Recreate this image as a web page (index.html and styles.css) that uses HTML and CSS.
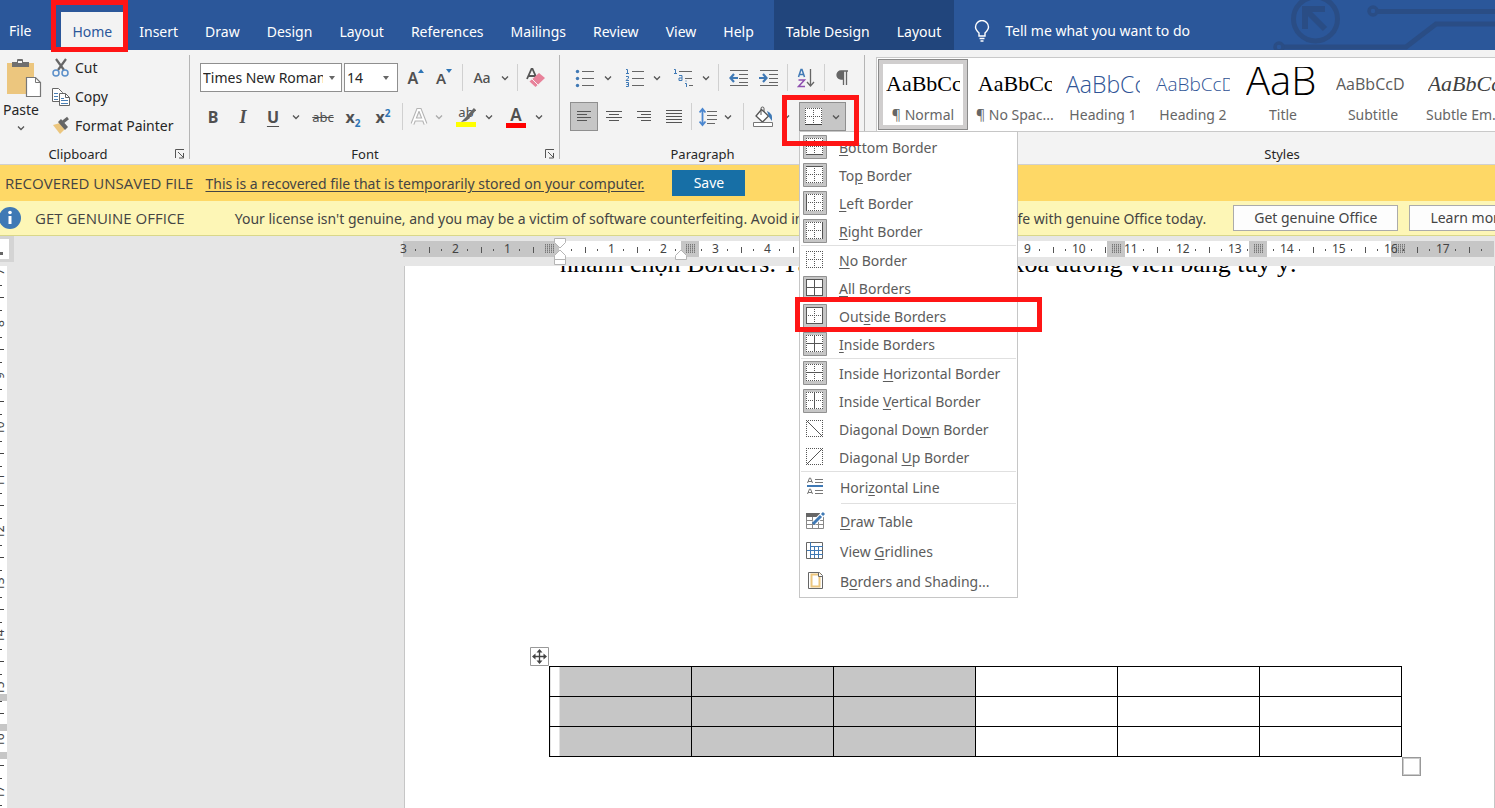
FILE: index.html
```html
<!DOCTYPE html>
<html lang="en">
<head>
<meta charset="utf-8">
<title>Document - Word</title>
<link rel="stylesheet" href="styles.css">
</head>
<body>
<svg class="defs" aria-hidden="true">
  <symbol id="chev" viewBox="0 0 8 6"><path d="M1 1.5l3 3 3-3" fill="none" stroke="#555" stroke-width="1.3"/></symbol>
  <symbol id="launch" viewBox="0 0 10 10"><path d="M.5 9V.5H9M3 3l5 5M8.5 4v5H4" fill="none" stroke="#555"/></symbol>
  <symbol id="tile" viewBox="0 0 24 24"><path d="M.5.5h23v23H.5z" fill="#c6c6c6" stroke="#919191"/></symbol>
  <symbol id="dots" viewBox="0 0 24 24"><path d="M3 3h17v17H3z" fill="#fff" stroke="none"/><path d="M3 3.5h17M3 19.5h17M3.5 3v17M19.5 3v17" stroke="#555" stroke-dasharray="1 1"/></symbol>
  <symbol id="cross" viewBox="0 0 24 24"><path d="M5 11.5h14M11.5 5v14" stroke="#555" stroke-dasharray="1 1"/></symbol>
</svg>

<header class="titlebar">
  <svg class="circuit" width="223" height="50" viewBox="0 0 223 50" aria-hidden="true" fill="none" stroke="#2a4d85">
    <circle cx="43.500" cy="19" r="22" stroke-width="5"/>
    <path d="M33 29V9h20M36 12l17 17" stroke-width="6"/>
    <circle cx="101" cy="11" r="4" stroke-width="3.500"/><path d="M105 11.500h118M10 47h124l30-23h60" stroke-width="5"/>
    <circle cx="7" cy="47" r="4" stroke-width="3.500"/>
  </svg>
  <nav class="tabs">
    <a class="tab file" href="#">File</a>
    <a class="tab active" href="#">Home<span class="mark mark-home"></span></a>
    <a class="tab" href="#">Insert</a>
    <a class="tab" href="#">Draw</a>
    <a class="tab" href="#">Design</a>
    <a class="tab" href="#">Layout</a>
    <a class="tab" href="#">References</a>
    <a class="tab" href="#">Mailings</a>
    <a class="tab" href="#">Review</a>
    <a class="tab" href="#">View</a>
    <a class="tab" href="#">Help</a>
    <span class="context"><a class="tab" href="#">Table Design</a><a class="tab" href="#">Layout</a></span>
  </nav>
  <button class="tell" type="button">
    <svg width="16" height="22" viewBox="0 0 16 22" fill="none" stroke="#fff" stroke-width="1.400"><path d="M5 16v-3C3 11 1.500 9.500 1.500 7a6.500 6.500 0 0113 0c0 2.500-1.500 4-3.500 6v3zM5.500 18.500h5M6.500 21h3"/></svg>
    Tell me what you want to do
  </button>
</header>

<section class="ribbon">
  <div class="group clipboard">
    <div class="body">
      <button class="paste" type="button">
        <svg width="36" height="40" viewBox="0 0 36 40"><path d="M1 4h27v31H1z" fill="#ecc67e"/><path d="M6 8V3h5V1q0-1 1-1h4q1 0 1 1v2h6v5z" fill="#6f6f6f"/><path d="M12 2h4v2h-4z" fill="#f3f3f3"/><path d="M20.500 18.500h9l5 5v14h-14z" fill="#fff" stroke="#777" stroke-width="1.200"/><path d="M29.500 18.500v5h5" fill="none" stroke="#777"/></svg>
        <span>Paste</span>
        <svg width="8" height="6"><use href="#chev"/></svg>
      </button>
      <div class="clips">
        <button type="button"><svg width="18" height="20" viewBox="0 0 18 20" fill="none"><path d="M4 1l8 11M14 1L6 12" stroke="#666" stroke-width="2.200"/><circle cx="4" cy="15" r="3" stroke="#5b8fc9" stroke-width="1.500"/><circle cx="13" cy="15" r="3" stroke="#5b8fc9" stroke-width="1.500"/></svg>Cut</button>
        <button type="button"><svg width="18" height="20" viewBox="0 0 18 20" fill="#fff" stroke="#666"><path d="M.5 1.500h6l4 4v9H.5z"/><path d="M2 6.500h4M2 9.500h4M2 12.500h4" stroke="#4a7fb5"/><path d="M7.500 6.500h6l4 4v8h-10z"/><path d="M13.500 6.500v4h4" fill="none"/><path d="M9 11.500h3M9 13.500h7M9 16.500h7" stroke="#4a7fb5"/></svg>Copy</button>
        <button type="button"><svg width="18" height="20" viewBox="0 0 18 20"><path d="M1 9l7-2 5 6-5 5z" fill="#ecc67e"/><path d="M6 6l3-3 7 8-3 3z" fill="#666"/><path d="M11 6l5-4" stroke="#666" stroke-width="3"/></svg>Format Painter</button>
      </div>
    </div>
    <div class="caption"><span>Clipboard</span><button type="button" aria-label="Clipboard options"><svg width="10" height="10"><use href="#launch"/></svg></button></div>
  </div>

  <div class="group font">
    <div class="body rows">
      <div class="row">
        <label class="combo name"><select aria-label="Font"><option>Times New Roman</option></select><svg width="6" height="4" viewBox="0 0 6 4"><path d="M0 0h6L3 4z" fill="#666"/></svg></label>
        <label class="combo size"><select aria-label="Font size"><option>14</option></select><svg width="6" height="4" viewBox="0 0 6 4"><path d="M0 0h6L3 4z" fill="#666"/></svg></label>
        <button class="ib narrow lead" type="button" aria-label="Grow font"><span class="ga">A</span><svg class="tip" width="6" height="4" viewBox="0 0 6 4"><path d="M0 4h6L3 0z" fill="#2e75b6"/></svg></button>
        <button class="ib narrow" type="button" aria-label="Shrink font"><span class="ga sm">A</span><svg class="tip" width="6" height="4" viewBox="0 0 6 4"><path d="M0 0h6L3 4z" fill="#2e75b6"/></svg></button>
        <i class="sep"></i>
        <button class="ib split" type="button" aria-label="Change case"><span class="case">Aa</span><svg width="8" height="6"><use href="#chev"/></svg></button>
        <i class="sep"></i>
        <button class="ib narrow" type="button" aria-label="Clear formatting"><svg width="20" height="22" viewBox="0 0 20 22"><path d="M1 12L5.500 2h1L11 12M3 9h6" fill="none" stroke="#555" stroke-width="1.800"/><path d="M3.500 14.500L13 6l6 5-9.500 9z" fill="#e8829a"/><path d="M6 12l6 6" stroke="#f3f3f3"/></svg></button>
      </div>
      <div class="row second">
        <button class="ib" type="button"><b>B</b></button>
        <button class="ib" type="button"><b class="it">I</b></button>
        <button class="ib split gap" type="button"><b class="un">U</b><svg width="8" height="6"><use href="#chev"/></svg></button>
        <button class="ib" type="button"><s>abc</s></button>
        <button class="ib" type="button"><b>x<sub>2</sub></b></button>
        <button class="ib" type="button"><b>x<sup>2</sup></b></button>
        <i class="sep"></i>
        <button class="ib split slim gap" type="button" aria-label="Text effects"><svg width="18" height="20" viewBox="0 0 18 20"><path d="M2.500 17L8 3h2l5.500 14M5 12.500h8" fill="none" stroke="#b4b4b4" stroke-width="4"/><path d="M2.500 17L8 3h2l5.500 14M5 12.500h8" fill="none" stroke="#fff" stroke-width="1.800"/></svg><svg class="dim" width="8" height="6"><use href="#chev"/></svg></button>
        <button class="ib split gap" type="button" aria-label="Highlight"><span class="hl"><em>ab</em><svg width="16" height="15" viewBox="0 0 16 15"><path d="M15 1L8 9" stroke="#666" stroke-width="3"/><path d="M8 7l2 3-4 3-5 1z" fill="#666"/></svg></span><svg width="8" height="6"><use href="#chev"/></svg></button>
        <button class="ib split" type="button" aria-label="Font color"><span class="fc">A</span><svg width="8" height="6"><use href="#chev"/></svg></button>
      </div>
    </div>
    <div class="caption"><span>Font</span><button type="button" aria-label="Font options"><svg width="10" height="10"><use href="#launch"/></svg></button></div>
  </div>

  <div class="group para">
    <div class="body rows">
      <div class="row">
        <button class="ib split gap" type="button" aria-label="Bullets"><svg width="20" height="20" viewBox="0 0 20 20"><path d="M7 3.500h12M7 10.500h12M7 17.500h12" stroke="#666"/><g fill="#3f79b5"><circle cx="2.500" cy="3.500" r="1.700"/><circle cx="2.500" cy="10.500" r="1.700"/><circle cx="2.500" cy="17.500" r="1.700"/></g></svg><svg width="8" height="6"><use href="#chev"/></svg></button>
        <button class="ib split gap" type="button" aria-label="Numbering"><svg width="20" height="20" viewBox="0 0 20 20" fill="none"><path d="M8 3.500h12M8 10.500h12M8 17.500h12" stroke="#666"/><path d="M2 1.500h1.500V5M2 5.500h3M2 8.500h2.500v1.500L2 12.500h3M2 14.500h2.500v4H2M2.500 16.500h2" stroke="#3f79b5"/></svg><svg width="8" height="6"><use href="#chev"/></svg></button>
        <button class="ib split gap" type="button" aria-label="Multilevel list"><svg width="20" height="20" viewBox="0 0 20 20" fill="none"><path d="M6 3.500h13M12 10.500h7M16 17.500h4" stroke="#666"/><path d="M1 1.500h1.500V5M1 5.500h3M6 7.500h3v5H6v-2.500h3M12 15.500h1.500V19M13 12.500v1" stroke="#3f79b5"/></svg><svg width="8" height="6"><use href="#chev"/></svg></button>
        <i class="sep tight"></i>
        <button class="ib" type="button" aria-label="Decrease indent"><svg width="19" height="18" viewBox="0 0 19 18" fill="none"><path d="M1 1.500h18M10 5.500h9M10 9.500h9M10 13.500h9M1 16.500h18" stroke="#666"/><path d="M9 9H2M5 5L1.500 9 5 13" stroke="#3f79b5" stroke-width="2.200"/></svg></button>
        <button class="ib" type="button" aria-label="Increase indent"><svg width="19" height="18" viewBox="0 0 19 18" fill="none"><path d="M1 1.500h18M10 5.500h9M10 9.500h9M10 13.500h9M1 16.500h18" stroke="#666"/><path d="M0 9h7M4 5l3.500 4L4 13" stroke="#3f79b5" stroke-width="2.200"/></svg></button>
        <i class="sep"></i>
        <button class="ib narrow" type="button" aria-label="Sort"><svg width="18" height="20" viewBox="0 0 18 20" fill="none"><path d="M1.500 9L4 1.500h1L7.500 9M2.500 6.500h4" stroke="#3f79b5" stroke-width="1.500"/><path d="M1.500 12h6l-6 6.500h6.500" stroke="#8e4fb0" stroke-width="1.500"/><path d="M13.500 1v16M10 14l3.500 4 3.500-4" stroke="#666" stroke-width="1.300"/></svg></button>
        <i class="sep"></i>
        <button class="ib narrow" type="button" aria-label="Show marks"><svg width="14" height="16" viewBox="0 0 14 16"><path d="M7 9H5a4 4 0 010-8h7M7.500 1v14M10.500 1v14" fill="none" stroke="#666" stroke-width="1.300"/><path d="M7 9H5a4 4 0 010-8h2z" fill="#666"/></svg></button>
      </div>
      <div class="row aligns">
        <button class="ib narrow on" type="button" aria-label="Align left"><svg width="16" height="14" viewBox="0 0 16 14"><path d="M1 1.500h14M1 4.500h10M1 7.500h14M1 10.500h10" stroke="#555"/></svg></button>
        <button class="ib narrow" type="button" aria-label="Center"><svg width="16" height="14" viewBox="0 0 16 14"><path d="M0 1.500h16M3 4.500h10M0 7.500h16M3 10.500h10" stroke="#555"/></svg></button>
        <button class="ib narrow" type="button" aria-label="Align right"><svg width="16" height="14" viewBox="0 0 16 14"><path d="M1 1.500h14M5 4.500h10M1 7.500h14M5 10.500h10" stroke="#555"/></svg></button>
        <button class="ib narrow" type="button" aria-label="Justify"><svg width="16" height="14" viewBox="0 0 16 14"><path d="M0 .5h16M0 3.500h16M0 6.500h16M0 9.500h16M0 12.500h16" stroke="#555"/></svg></button>
        <i class="sep tight"></i>
        <button class="ib split slim gap" type="button" aria-label="Line spacing"><svg width="18" height="20" viewBox="0 0 18 20" fill="none"><path d="M8 4.500h10M8 8.500h10M8 12.500h10M8 16.500h8" stroke="#666"/><path d="M3.500 2v16M.5 5.500l3-3.500 3 3.500M.5 14.500l3 3.500 3-3.500" stroke="#4a86cf" stroke-width="1.800"/></svg><svg width="8" height="6"><use href="#chev"/></svg></button>
        <i class="sep"></i>
        <button class="ib split" type="button" aria-label="Shading"><svg width="22" height="22" viewBox="0 0 22 22"><path d="M9.500 3.500l7 6.500-6 6-6.500-6z" fill="#fff" stroke="#555" stroke-width="1.300"/><path d="M9 9V2.500Q9 1 10.500 1T12 2.500V6" fill="none" stroke="#555"/><path d="M15 5q6 2 5 10l-3-4z" fill="#3f79b5"/><path d="M1.500 16.500h19v4h-19z" fill="#fff" stroke="#777"/></svg><svg width="8" height="6"><use href="#chev"/></svg></button>
        <div class="borders">
          <button class="ib split on" type="button" aria-label="Borders" aria-expanded="true"><svg width="24" height="24"><use href="#dots"/><use href="#cross"/><path d="M3 19.500h17" stroke="#444"/></svg><svg width="8" height="6"><use href="#chev"/></svg></button>
          <div class="menu" role="menu">
            <button role="menuitem"><svg class="ic"><use href="#tile"/><use href="#dots"/><use href="#cross"/><path d="M3 19.500h17"/></svg><span><u>B</u>ottom Border</span></button>
            <button role="menuitem"><svg class="ic"><use href="#tile"/><use href="#dots"/><use href="#cross"/><path d="M3 3.500h17"/></svg><span>To<u>p</u> Border</span></button>
            <button role="menuitem"><svg class="ic"><use href="#tile"/><use href="#dots"/><use href="#cross"/><path d="M3.500 3v17"/></svg><span><u>L</u>eft Border</span></button>
            <button role="menuitem"><svg class="ic"><use href="#tile"/><use href="#dots"/><use href="#cross"/><path d="M19.500 3v17"/></svg><span><u>R</u>ight Border</span></button>
            <hr>
            <button role="menuitem"><svg class="ic"><use href="#dots"/><use href="#cross"/></svg><span><u>N</u>o Border</span></button>
            <button role="menuitem"><svg class="ic"><use href="#tile"/><use href="#dots"/><path d="M3.500 3.500h16v16h-16zM3 11.500h17M11.500 3v17"/></svg><span><u>A</u>ll Borders</span></button>
            <button role="menuitem"><svg class="ic"><use href="#tile"/><use href="#dots"/><use href="#cross"/><path d="M3.500 3.500h16v16h-16z"/></svg><span>Out<u>s</u>ide Borders</span><i class="mark mark-item"></i></button>
            <button role="menuitem"><svg class="ic"><use href="#tile"/><use href="#dots"/><path d="M3 11.500h17M11.500 3v17"/></svg><span><u>I</u>nside Borders</span></button>
            <hr>
            <button role="menuitem"><svg class="ic"><use href="#tile"/><use href="#dots"/><use href="#cross"/><path d="M3 11.500h17"/></svg><span>Inside <u>H</u>orizontal Border</span></button>
            <button role="menuitem"><svg class="ic"><use href="#tile"/><use href="#dots"/><use href="#cross"/><path d="M11.500 3v17"/></svg><span>Inside <u>V</u>ertical Border</span></button>
            <button role="menuitem"><svg class="ic"><use href="#dots"/><path d="M4 4l15 15"/></svg><span>Diagonal Do<u>w</u>n Border</span></button>
            <button role="menuitem"><svg class="ic"><use href="#dots"/><path d="M4 19L19 4"/></svg><span>Diagonal <u>U</u>p Border</span></button>
            <hr>
            <button class="tall" role="menuitem"><svg class="ic"><path d="M4.500 8l2-5h1l2 5M5 6.500h4M4.500 19l2-5h1l2 5M5 17.500h4M12 4.500h8M12 7.500h8M12 15.500h8M12 18.500h8" stroke="#777"/><path d="M4 11h16" stroke="#3f79b5" stroke-width="2"/></svg><span>Hori<u>z</u>ontal Line</span></button>
            <hr class="inset">
            <button class="tall" role="menuitem"><svg class="ic"><path d="M3.500 5.500h17v14h-17zM3 11.500h17M9.500 8v12M15.500 8v12M3 15.500h17" stroke="#888"/><path d="M3 4h14v4H3z" fill="#666" stroke="none"/><path d="M11 14l9-9" stroke="#fff" stroke-width="5"/><path d="M10 15l8-8M19 6l2-2" stroke="#3f79b5" stroke-width="3"/></svg><span><u>D</u>raw Table</span></button>
            <button class="tall" role="menuitem"><svg class="ic"><path d="M3.500 3.500h16v16h-16z" stroke="#666"/><path d="M8 7.500h12M4 11.500h15M8 15.500h12M7.500 3v16M11.500 7v12M15.500 7v12" stroke="#3f79b5"/></svg><span>View <u>G</u>ridlines</span></button>
            <button class="tall" role="menuitem"><svg class="ic"><path d="M5.500 3.500h11l3 3v13h-14z" stroke="#666"/><path d="M8.500 5.500h8v12h-8z" stroke="#ecc67e" stroke-width="2"/><path d="M15.500 3.500v4h4" fill="#fff" stroke="#666"/></svg><span>B<u>o</u>rders and Shading...</span></button>
          </div>
          <span class="mark mark-borders"></span>
        </div>
      </div>
    </div>
    <div class="caption"><span>Paragraph</span><i></i></div>
  </div>

  <div class="group styles">
    <div class="body">
      <div class="gallery">
        <button class="style current" type="button"><span class="pv body-text">AaBbCc</span><span class="nm">¶ Normal</span></button>
        <button class="style" type="button"><span class="pv body-text">AaBbCc</span><span class="nm">¶ No Spac...</span></button>
        <button class="style" type="button"><span class="pv h1">AaBbCc</span><span class="nm">Heading 1</span></button>
        <button class="style" type="button"><span class="pv h2">AaBbCcD</span><span class="nm">Heading 2</span></button>
        <button class="style" type="button"><span class="pv title">AaB</span><span class="nm">Title</span></button>
        <button class="style" type="button"><span class="pv subtitle">AaBbCcD</span><span class="nm">Subtitle</span></button>
        <button class="style" type="button"><span class="pv subtle">AaBbCc</span><span class="nm">Subtle Em...</span></button>
      </div>
    </div>
    <div class="caption"><span>Styles</span></div>
  </div>
</section>

<section class="bar recovered">
  <strong>RECOVERED UNSAVED FILE</strong>
  <a href="#">This is a recovered file that is temporarily stored on your computer.</a>
  <button type="button">Save</button>
</section>
<section class="bar genuine">
  <svg width="22" height="22" viewBox="0 0 22 22"><circle cx="11" cy="11" r="11" fill="#3f79b5"/><circle cx="11" cy="5.500" r="1.800" fill="#fff"/><path d="M11 9v8" stroke="#fff" stroke-width="3"/></svg>
  <strong>GET GENUINE OFFICE</strong>
  <p>Your license isn't genuine, and you may be a victim of software counterfeiting. Avoid interruption and keep your files safe with genuine Office today.</p>
  <button type="button">Get genuine Office</button>
  <button type="button">Learn more</button>
</section>

<div class="ruler-row">
  <button class="tabstop" type="button" aria-label="Tab stop"></button>
  <div class="ruler">
    <i class="col" style="left:988px"></i>
    <div class="units"><span class="u">3</span><span class="u">2</span><span class="u">1</span><span class="u"></span><span class="u">1</span><span class="u">2</span><span class="u">3</span><span class="u">4</span><span class="u">5</span><span class="u">6</span><span class="u">7</span><span class="u">8</span><span class="u">9</span><span class="u">10</span><span class="u">11</span><span class="u">12</span><span class="u">13</span><span class="u">14</span><span class="u">15</span><span class="u">16</span><span class="u">17</span></div>
    <i class="col" style="left:137px"></i>
    <i class="col" style="left:278px"></i>
    <i class="col" style="left:704px"></i>
    <i class="col" style="left:846px"></i>
    <svg class="indent" width="12" height="29" viewBox="0 0 12 29" fill="#fff" stroke="#b5b5b5"><path d="M.5.5h11v4L6 10 .5 4.500zM6 12l5.500 5.500v4H.5v-4zM.5 21.500h11v5H.5z"/></svg>
    <svg class="indent right" width="12" height="29" viewBox="0 0 12 29" fill="#fff" stroke="#b5b5b5"><path d="M6 12l5.500 5.500v4H.5v-4z"/></svg>
  </div>
</div>

<main class="workspace">
  <div class="vruler">
    <span>7</span><span>8</span><span>9</span><span>10</span><span>11</span><span>12</span><span>13</span><span>14</span><span>15</span><span>16</span><span>17</span>
    <i class="band" style="top:428px"></i><i class="band" style="top:458px"></i><i class="band" style="top:486px"></i>
  </div>
  <article class="page">
    <p lang="vi">nhanh chọn Borders. Tại đây bạn có thể vẽ xóa đường viền bảng tùy ý.</p>
    <div class="tablebox">
      <svg class="move" width="19" height="19" viewBox="0 0 19 19"><path d="M.5.5h18v18H.5z" fill="#fff" stroke="#999"/><path d="M9.500 4v11M4 9.500h11" stroke="#444" stroke-width="1.300"/><path d="M9.500 2l3 3.500h-6zM9.500 17l3-3.500h-6zM2 9.500l3.500-3v6zM17 9.500l-3.500-3v6z" fill="#444"/></svg>
      <table>
        <tr><td class="sel"></td><td class="sel"></td><td class="sel"></td><td></td><td></td><td></td></tr>
        <tr><td class="sel"></td><td class="sel"></td><td class="sel"></td><td></td><td></td><td></td></tr>
        <tr><td class="sel"></td><td class="sel"></td><td class="sel"></td><td></td><td></td><td></td></tr>
      </table>
      <i class="resize"></i>
    </div>
  </article>
</main>
</body>
</html>
```
FILE: styles.css
```css
* { box-sizing: border-box; }
body {
  margin: 0;
  height: 100vh;
  display: flex;
  flex-direction: column;
  overflow: hidden;
  background: #e6e6e6;
  color: #262626;
  font: 14px/20px "Noto Sans", "Open Sans", sans-serif;
}
button {
  margin: 0;
  padding: 0;
  border: 0;
  background: none;
  color: inherit;
  font: inherit;
}
svg { flex: none; display: block; }
p { margin: 0; }
.defs { position: absolute; width: 0; height: 0; }
.mark { position: absolute; border: 5px solid #ff1515; pointer-events: none; z-index: 5; }

/* title bar */
.titlebar {
  position: relative;
  flex: none;
  display: flex;
  height: 50px;
  background: #2b579a;
  color: #fff;
}
.circuit { position: absolute; right: 0; top: 0; }
.tabs { display: flex; gap: 5px; white-space: nowrap; }
.tab {
  position: relative;
  display: flex;
  align-items: center;
  padding: 13px 11px 0;
  color: #fff;
  text-decoration: none;
}
.tab.file { padding-left: 9px; padding-top: 12px; margin-right: 14px; }
.tab.active { margin: 12px 0 3px; padding-top: 4px; background: #f3f3f3; color: #2b579a; }
.mark-home { inset: -12px -5px -5px -10px; }
.context { display: flex; gap: 5px; margin-left: 4px; padding: 0 2px 0 1px; background: #21457c; }
.tell { display: flex; align-items: center; gap: 15px; margin-left: 20px; padding-top: 12px; white-space: nowrap; }

/* ribbon */
.ribbon {
  position: relative;
  z-index: 2;
  flex: none;
  display: flex;
  height: 115px;
  background: #f3f3f3;
  border-bottom: 1px solid #d0d0d0;
  white-space: nowrap;
}
.group { position: relative; flex: none; display: flex; flex-direction: column; }
.group:not(.styles)::after {
  content: "";
  position: absolute;
  right: 0;
  top: 5px;
  bottom: 5px;
  width: 1px;
  background: #b5b5b5;
}
.group .body { height: 94px; }
.clipboard { width: 190px; }
.font { width: 370px; }
.para { width: 305px; }
.styles { flex: 1; min-width: 0; }
.caption { display: grid; grid-template-columns: 1fr 20px; align-items: center; font-size: 13px; text-align: center; }
.caption button { justify-self: center; }
.clipboard .caption span { padding-right: 14px; }
.styles .caption { padding-left: 224px; }
.clipboard .body { display: flex; }
.paste { width: 42px; display: flex; flex-direction: column; align-items: center; padding-top: 9px; }
.paste span { margin: 1px 0 5px; }
.paste svg:first-child { margin-left: 6px; }
.clips { display: flex; flex-direction: column; margin-left: 10px; padding-top: 3px; }
.clips button { display: flex; align-items: center; gap: 5px; height: 29px; }

.rows { display: flex; flex-direction: column; gap: 10px; padding: 13px 0 0 10px; }
.row { display: flex; height: 29px; }
.ib { position: relative; display: flex; align-items: center; justify-content: center; width: 30px; color: #505050; }
.ib.narrow { width: 28px; }
.ib.split { width: 46px; display: grid; grid-template-columns: 30px 16px; justify-items: center; }
.ib.slim { width: 40px; grid-template-columns: 24px 16px; }
.ib.on { background: #c6c6c6; border: 1px solid #8f8f8f; }
.gap { margin-right: 4px; }
.para .gap { margin-right: 3px; }
.lead { margin-left: 4px; }
.sep { width: 1px; height: 27px; margin: 1px 4px; background: #d0d0d0; }
.sep.tight { margin-left: 1px; }
.dim { opacity: .45; }
.aligns .narrow { margin-right: 2px; }

.combo { display: grid; grid-template-columns: 1fr 14px; align-items: center; background: #fff; border: 1px solid #8f8f8f; overflow: hidden; }
.combo.name { width: 142px; margin-right: 2px; grid-template-columns: 122px 1fr; }
.combo.name svg { justify-self: center; }
.combo.size { width: 54px; }
.combo select {
  width: 100%;
  padding: 0 0 0 2px;
  border: 0;
  background: none;
  appearance: none;
  color: #262626;
  font: inherit;
}
.ga { font-size: 16px; font-weight: 600; }
.ga.sm { font-size: 15px; }
.tip { align-self: flex-start; margin-top: 6px; }
.case { font-weight: 500; }
.second { margin-left: -2px; }
.second b { font-size: 16px; }
.second .it { font-family: "Liberation Serif", serif; font-style: italic; font-size: 18px; }
.second .un { text-decoration: underline; text-underline-offset: 3px; }
.second s { font-size: 13px; }
sub, sup { font-size: 10px; line-height: 0; color: #2e75b6; }
.hl { display: grid; width: 20px; height: 21px; border-bottom: 5px solid #ff0; }
.hl em { grid-area: 1 / 1; font: 13px/12px "Noto Sans", sans-serif; }
.hl svg { grid-area: 1 / 1; margin: 2px 0 0 4px; }
.fc { width: 20px; border-bottom: 5px solid red; font: 600 17px/17px "Noto Sans", sans-serif; text-align: center; }

/* borders menu */
.borders { position: relative; margin-left: 5px; }
.borders > .ib { width: 47px; height: 29px; grid-template-columns: 27px 18px; }
.mark-borders { inset: -7px -13px -15px -17px; }
.menu {
  position: absolute;
  z-index: 3;
  left: 0;
  top: 29px;
  width: 219px;
  padding: 1px 1px 1px 3px;
  background: #fff;
  border: 1px solid #c6c6c6;
  color: #5c5c5c;
}
.menu button { position: relative; display: flex; align-items: center; gap: 12px; width: 100%; height: 28px; text-align: left; }
.menu button span { padding-top: 2px; }
.menu .tall { height: 30px; gap: 13px; }
.menu hr { height: 1px; margin: 0 0 0 -2px; border: 0; background: #e0e0e0; }
.menu .inset { margin: 1px 0 2px 38px; }
.menu u { text-underline-offset: 2px; }
.ic { width: 24px; height: 24px; fill: none; stroke: #555; }
.mark-item { left: -8px; right: -26px; top: -5px; bottom: -2px; }

/* style gallery */
.gallery { display: flex; margin: 7px 0 0 11px; padding: 1px; height: 75px; background: #fff; border: 1px solid #c9c9c9; border-right: 0; overflow: hidden; }
.style { flex: none; width: 90px; height: 71px; display: grid; grid-template-rows: 1fr 20px; justify-items: center; padding: 8px 8px 5px; }
.style.current { border: 1px solid #8a8a8a; outline: 4px solid #d0cece; outline-offset: -5px; padding: 7px 7px 4px; }
.pv { width: 74px; height: 36px; overflow: hidden; text-align: left; color: #000; }
.nm { color: #666; }
.body-text { font: 22px/34px "Liberation Serif", serif; }
.h1 { font: 300 23px/34px "Open Sans", sans-serif; color: #2f5496; }
.h2 { font: 300 19px/34px "Open Sans", sans-serif; color: #2f5496; }
.title { font: 300 40px/26px "Open Sans", sans-serif; }
.subtitle { font: 16px/34px "Open Sans", sans-serif; color: #5a5a5a; }
.subtle { font: italic 22px/34px "Liberation Serif", serif; color: #404040; }

/* message bars */
.bar { flex: none; display: flex; align-items: center; white-space: nowrap; color: #444; overflow: hidden; }
.bar strong { font: 15px/20px "Open Sans", sans-serif; }
.bar button { height: 26px; }
.recovered { height: 36px; padding-left: 5px; background: #fed866; }
.recovered a { margin: 0 28px 0 12px; padding-top: 1px; color: #444; text-underline-offset: 2px; }
.recovered button { width: 73px; background: #176fa6; color: #fff; }
.genuine { height: 35px; background: #fdf6b6; border-bottom: 1px solid #d9d78a; }
.genuine svg { margin: 0 14px 0 -1px; }
.genuine p { margin: 0 27px 0 50px; padding-top: 1px; }
.genuine button { padding: 0 20px; margin-right: 11px; background: #fdfdfd; border: 1px solid #ababab; }

/* rulers */
.ruler-row { flex: none; display: flex; height: 30px; }
.tabstop { width: 14px; height: 26px; background: linear-gradient(#666, #666) 0 13px / 3px 3px no-repeat, #fff; border: solid #d4d4d4; border-width: 3px 5px 3px 0; }
.ruler { position: relative; flex: 1; margin: 5px 1px 9px 389px; background: linear-gradient(90deg, #c6c6c6 156px, #fff 156px 988px, #c6c6c6 988px); }
.units { position: relative; display: flex; margin-left: -7px; overflow: hidden; }
.u {
  flex: none;
  width: 52px;
  height: 16px;
  padding-left: 4px;
  font-size: 12px;
  line-height: 16px;
  color: #444;
  background:
    linear-gradient(#555, #555) 19px 8px / 1px 2px no-repeat,
    linear-gradient(#555, #555) 33px 6px / 1px 6px no-repeat,
    linear-gradient(#555, #555) 45px 8px / 1px 2px no-repeat;
}
.u:nth-child(n+14) { padding-left: 0; }
.col { position: absolute; top: 0; width: 18px; height: 16px; border: solid #c6c6c6; border-width: 3px 4px 4px; background: repeating-linear-gradient(90deg, #c6c6c6 0 1px, transparent 1px 2px), repeating-linear-gradient(#777 0 1px, #999 1px 2px); }
.indent { position: absolute; left: 151px; top: -3px; }
.indent.right { left: 272px; }

/* document */
.workspace { flex: 1; min-height: 0; display: flex; }
.vruler { position: relative; width: 7px; overflow: hidden; background: #fff; }
.vruler span {
  display: flex;
  align-items: center;
  justify-content: center;
  width: 16px;
  height: 52px;
  margin-left: -8px;
  font-size: 12px;
  line-height: 16px;
  color: #444;
  writing-mode: vertical-rl;
  transform: rotate(180deg);
  background:
    linear-gradient(#444, #444) 4px 0 / 4px 1px no-repeat,
    linear-gradient(#444, #444) 6px 12px / 2px 1px no-repeat,
    linear-gradient(#444, #444) 6px 39px / 2px 1px no-repeat;
}
.vruler span:first-child { margin-top: -20px; }
.band { position: absolute; left: 0; width: 7px; height: 7px; background: #c6c6c6; }
.page { flex: 1; margin-left: 397px; padding: 0 92px 0 144px; background: #fff; border: solid #c6c6c6; border-width: 0 1px; overflow: hidden; }
.page p { margin: -17px 0 0 11px; font: 26px/30px "Liberation Serif", serif; color: #000; white-space: nowrap; }
.tablebox { position: relative; margin-top: 387px; }
table { width: 100%; table-layout: fixed; border-collapse: collapse; }
td { height: 30px; padding: 0; border: 1px solid #000; }
.sel { background: #c6c6c6; }
.sel:first-child { background: linear-gradient(90deg, #fff 9px, #c6c6c6 9px); }
.move { position: absolute; left: -19px; top: -19px; }
.resize { position: absolute; left: 100%; top: 100%; width: 19px; height: 19px; background: #fff; border: 1px solid #999; outline: 1px solid #ccc; outline-offset: -2px; }
```
